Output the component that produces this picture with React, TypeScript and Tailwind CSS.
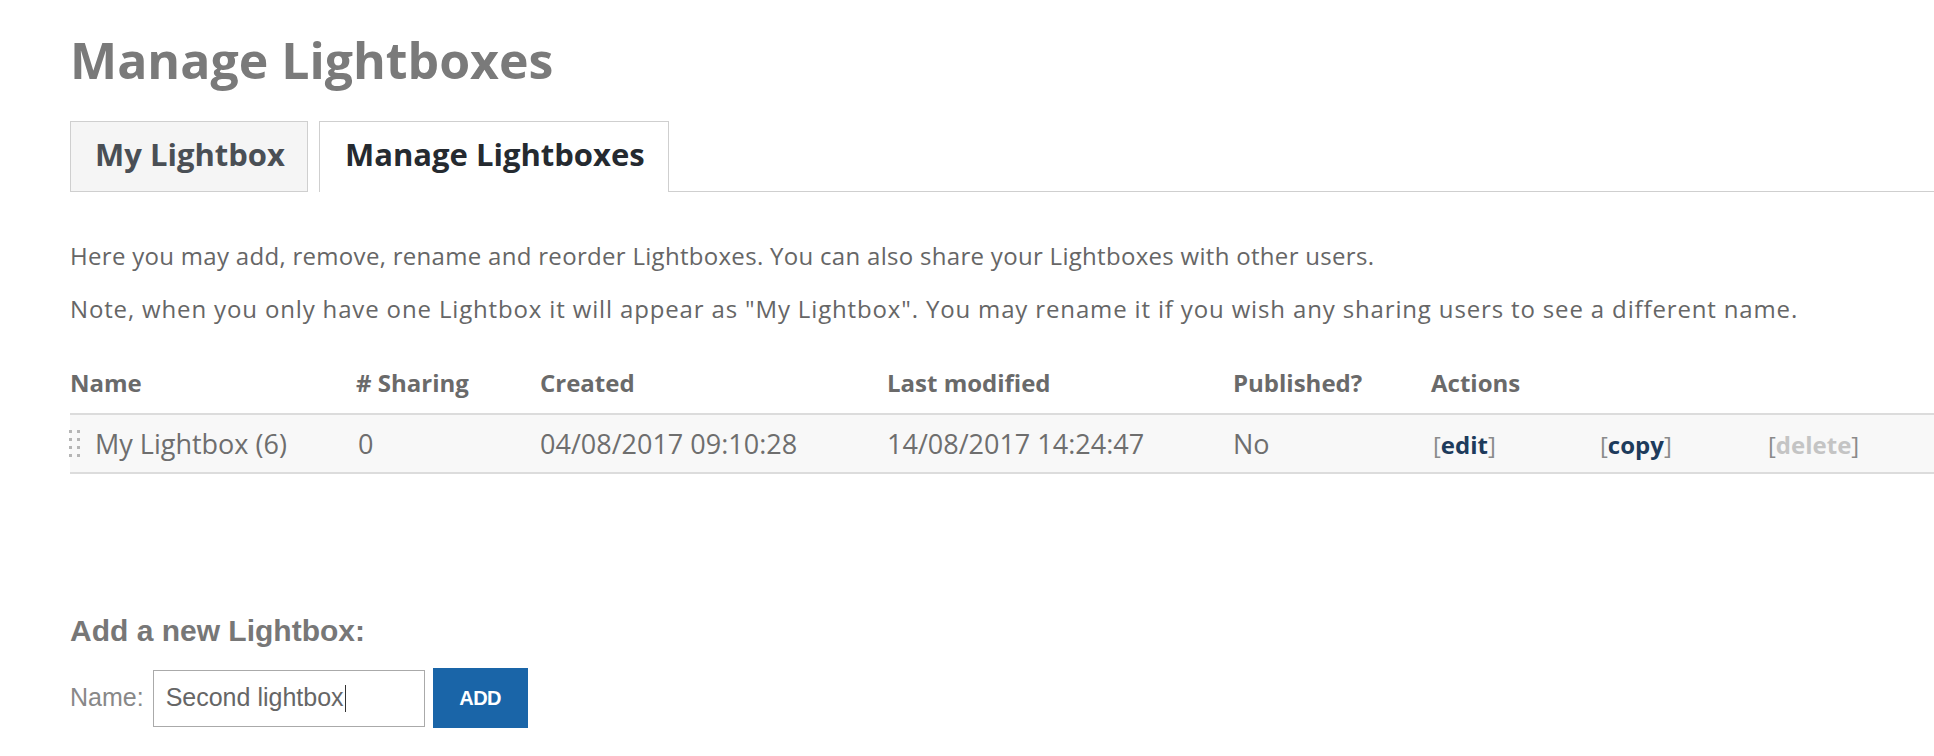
import React from "react";

const rows = [
  {
    name: "My Lightbox (6)",
    sharing: "0",
    created: "04/08/2017 09:10:28",
    modified: "14/08/2017 14:24:47",
    published: "No",
  },
];

const cols = "grid grid-cols-[286px_184px_347px_346px_198px_169px_168px_1fr]";

function DragHandle() {
  return (
    <div className="grid grid-cols-2 gap-x-[5px] gap-y-[5px] w-[11px] mr-[15px] -ml-[1px]">
      {Array.from({ length: 8 }).map((_, i) => (
        <span key={i} className="block w-[3px] h-[3px] bg-[#b5b5b5]" />
      ))}
    </div>
  );
}

function ActionLink({ label, disabled }: { label: string; disabled?: boolean }) {
  return (
    <span className="text-[24px] leading-none text-[#8a8a8a]">
      [
      <span className={disabled ? "font-bold text-[#c4c4c4]" : "font-bold text-[#1d3b5c]"}>{label}</span>
      ]
    </span>
  );
}

export default function App() {
  return (
    <div className="min-h-[756px] bg-white pl-[70px] font-['Open_Sans',sans-serif] text-[#666]">
      <h1 className="pt-[30px] text-[50px] leading-[60px] font-bold text-[#7a7a7a]">Manage Lightboxes</h1>

      {/* tabs */}
      <div className="mt-[31px] flex h-[71px] gap-[11px]">
        <div className="box-border h-[71px] w-[238px] border border-[#cfcfcf] bg-[#f5f5f5] pl-[24px] pt-[17px] text-[31px] leading-none font-bold text-[#4a4f55] whitespace-nowrap">
          My Lightbox
        </div>
        <div className="box-border h-[71px] w-[350px] border border-b-0 border-[#cfcfcf] bg-white pl-[25px] pt-[17px] text-[31px] leading-none font-bold text-[#252a30] whitespace-nowrap">
          Manage Lightboxes
        </div>
        <div className="-ml-[11px] h-[71px] flex-1 border-b border-[#cfcfcf]" />
      </div>

      <p className="mt-[48px] text-[24px] leading-[32px] tracking-[0.3px] whitespace-nowrap">
        Here you may add, remove, rename and reorder Lightboxes. You can also share your Lightboxes with other users.
      </p>
      <p className="mt-[21px] text-[24px] leading-[32px] tracking-[0.85px] whitespace-nowrap">
        Note, when you only have one Lightbox it will appear as "My Lightbox". You may rename it if you wish any sharing users to see a different name.
      </p>

      {/* table */}
      <div className="mt-[42px]">
        <div className={`${cols} h-[48px] border-b-2 border-[#dcdcdc] text-[24px] leading-[32px] font-bold text-[#6a6a6a]`}>
          <div>Name</div>
          <div># Sharing</div>
          <div>Created</div>
          <div>Last modified</div>
          <div>Published?</div>
          <div className="col-span-3">Actions</div>
        </div>
        {rows.map((r) => (
          <div
            key={r.name}
            className={`${cols} h-[59px] items-center border-b-2 border-[#dcdcdc] bg-[#f8f8f8] text-[27px] leading-none text-[#6e6e6e]`}
          >
            <div className="flex items-center">
              <DragHandle />
              <span>{r.name}</span>
            </div>
            <div className="pl-[2px]">{r.sharing}</div>
            <div>{r.created}</div>
            <div>{r.modified}</div>
            <div>{r.published}</div>
            <div className="pl-[2px]">
              <ActionLink label="edit" />
            </div>
            <div>
              <ActionLink label="copy" />
            </div>
            <div>
              <ActionLink label="delete" disabled />
            </div>
          </div>
        ))}
      </div>

      {/* add new */}
      <div className="mt-[142px] font-['Liberation_Sans',Arial,sans-serif]">
        <h2 className="text-[30px] leading-none font-bold text-[#777]">Add a new Lightbox:</h2>
        <div className="mt-[22px] flex h-[60px] items-center">
          <label htmlFor="lbname" className="text-[25px] text-[#888]">Name:</label>
          <div className="ml-[9px] flex h-[57px] w-[272px] items-center border border-[#aaa] bg-white pl-[12px] text-[25px] text-[#666]">
            <span id="lbname">Second lightbox</span>
            <span className="ml-[1px] inline-block h-[27px] w-[1px] bg-[#333]" />
          </div>
          <button
            type="button"
            className="ml-[8px] h-[60px] w-[95px] bg-[#1a65a8] text-[20px] font-bold tracking-tight text-white"
          >
            ADD
          </button>
        </div>
      </div>
    </div>
  );
}
